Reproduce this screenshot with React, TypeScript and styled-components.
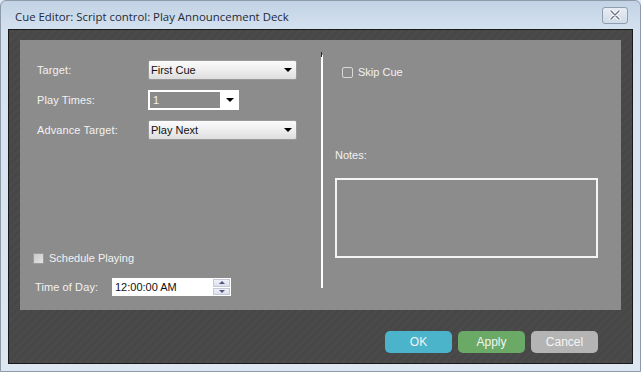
import React from 'react';
import { styled, createGlobalStyle } from 'styled-components';

const Global = createGlobalStyle`
  html, body { margin: 0; padding: 0; background: #dfe8f3; }
  body { font-family: "Liberation Sans", Arial, sans-serif; }
`;

const Window = styled.div`
  width: 641px;
  height: 372px;
  box-sizing: border-box;
  border: 1px solid #8e9aa8;
  border-radius: 6px 6px 0 0;
  background: linear-gradient(180deg, #c3d3e5 0px, #d4e1ef 30px, #dde7f2 100%);
  display: flex;
  flex-direction: column;
  overflow: hidden;
`;

const TitleBar = styled.div`
  height: 28px;
  flex: none;
  display: flex;
  align-items: center;
  justify-content: space-between;
  padding: 2px 12px 0 14px;
  box-sizing: border-box;
`;

const Title = styled.div`
  font-family: "Open Sans", "Noto Sans", sans-serif;
  font-size: 11.4px;
  color: #1e2a38;
`;

const CloseBtn = styled.div`
  width: 24px;
  height: 15px;
  margin-top: -2px;
  border: 1px solid #8f9db0;
  border-radius: 3px;
  background: linear-gradient(180deg, #e6edf5, #cfdbe8);
  display: flex;
  align-items: center;
  justify-content: center;
`;

const Frame = styled.div`
  margin: 0 7px;
  height: 335px;
  box-sizing: border-box;
  border: 1px solid #1a1a1a;
  background: repeating-linear-gradient(-45deg, #4a4a4a 0px, #4a4a4a 3px, #474747 3px, #474747 6px);
  padding: 10px 11px 0 11px;
  display: flex;
  flex-direction: column;
`;

const Panel = styled.div`
  height: 270px;
  background: #8c8c8c;
  display: grid;
  grid-template-columns: 301px 2px 1fr;
  color: #f2f2f2;
  font-size: 11px;
`;

const LeftCol = styled.div`
  display: flex;
  flex-direction: column;
  padding: 20px 0 14px 0;
`;

const FieldRow = styled.div`
  display: flex;
  align-items: center;
  height: 20px;
  margin-bottom: 10px;
  padding-left: 17px;
`;

const Label = styled.div<{ $w: number }>`
  width: ${p => p.$w}px;
  flex: none;
  color: #f2f2f2;
  font-size: 11px;
  letter-spacing: 0.1px;
`;

const Select = styled.div<{ $w: number }>`
  width: ${p => p.$w}px;
  height: 20px;
  box-sizing: border-box;
  border: 1px solid #9a9a9a;
  border-radius: 2px;
  background: linear-gradient(180deg, #fbfbfb 0%, #eeeeee 50%, #dedede 100%);
  display: flex;
  align-items: center;
  justify-content: space-between;
  padding: 0 4px 0 2px;
  color: #111;
  font-size: 11px;
`;

const Arrow = styled.span`
  width: 0;
  height: 0;
  border-left: 4px solid transparent;
  border-right: 4px solid transparent;
  border-top: 4px solid #000;
`;

const ComboBox = styled.div`
  width: 91px;
  height: 20px;
  box-sizing: border-box;
  background: #fff;
  padding: 2px;
  display: flex;
  align-items: center;
`;

const ComboField = styled.div`
  width: 70px;
  height: 16px;
  background: #8a8a8a;
  color: #f0f0f0;
  font-size: 11px;
  display: flex;
  align-items: center;
  padding-left: 3px;
  box-sizing: border-box;
  margin-right: 6px;
`;

const Spacer = styled.div`
  flex: 1;
`;

const CheckRow = styled.label<{ $pl: number }>`
  display: flex;
  align-items: center;
  gap: 5px;
  padding-left: ${p => p.$pl}px;
  font-size: 11px;
  color: #f2f2f2;
`;

const Check = styled.span<{ $filled?: boolean }>`
  width: 11px;
  height: 11px;
  box-sizing: border-box;
  border: 1px solid ${p => (p.$filled ? '#9c9c9c' : '#d8d8d8')};
  border-radius: ${p => (p.$filled ? '0' : '2px')};
  background: ${p => (p.$filled ? 'linear-gradient(135deg, #c9c9c9, #e3e3e3)' : 'transparent')};
  flex: none;
`;

const TimeRow = styled.div`
  display: flex;
  align-items: center;
  padding-left: 15px;
  margin-top: 14px;
`;

const TimeInput = styled.div`
  width: 119px;
  height: 18px;
  box-sizing: border-box;
  background: #fff;
  display: flex;
  align-items: center;
  justify-content: space-between;
  padding: 0 1px 0 3px;
  color: #111;
  font-size: 11px;
`;

const Spinner = styled.div`
  width: 17px;
  height: 16px;
  display: flex;
  flex-direction: column;
  gap: 1px;
`;

const SpinBtn = styled.div<{ $up?: boolean }>`
  flex: 1;
  border: 1px solid #c6c9d8;
  background: linear-gradient(180deg, #f0f1f7, #dcdfeb);
  display: flex;
  align-items: center;
  justify-content: center;
  &::after {
    content: '';
    border-left: 3px solid transparent;
    border-right: 3px solid transparent;
    ${p => (p.$up ? 'border-bottom: 3px solid #4e5680;' : 'border-top: 3px solid #4e5680;')}
  }
`;

const Divider = styled.div`
  margin-top: 15px;
  height: 233px;
  background: #ffffff;
  position: relative;
  &::before {
    content: '';
    position: absolute;
    left: 0;
    top: -3px;
    width: 1px;
    height: 5px;
    background: #2a2a2a;
  }
`;

const RightCol = styled.div`
  display: flex;
  flex-direction: column;
  padding: 26px 0 0 0;
`;

const NotesLabel = styled.div`
  margin: 71px 0 0 12px;
  font-size: 11px;
  color: #f2f2f2;
`;

const NotesBox = styled.div`
  margin: 17px 0 0 12px;
  width: 263px;
  height: 80px;
  box-sizing: border-box;
  border: 2px solid #f4f4f4;
`;

const Footer = styled.div`
  display: flex;
  justify-content: flex-end;
  gap: 6px;
  padding: 21px 23px 0 0;
`;

const Button = styled.div<{ $bg: string }>`
  width: 67px;
  height: 22px;
  border-radius: 5px;
  background: ${p => p.$bg};
  color: #f4f4f4;
  font-size: 12px;
  display: flex;
  align-items: center;
  justify-content: center;
`;

export default function App() {
  return (
    <>
      <Global />
      <Window>
        <TitleBar>
          <Title>Cue Editor: Script control: Play Announcement Deck</Title>
          <CloseBtn>
            <svg width="12" height="10" viewBox="0 0 12 10">
              <path d="M2 1 L10 9 M10 1 L2 9" stroke="#ffffff" strokeWidth="3.2" strokeLinecap="round" />
              <path d="M2 1 L10 9 M10 1 L2 9" stroke="#6b7480" strokeWidth="1.4" strokeLinecap="round" />
            </svg>
          </CloseBtn>
        </TitleBar>
        <Frame>
          <Panel>
            <LeftCol>
              <FieldRow>
                <Label $w={111}>Target:</Label>
                <Select $w={149}>First Cue<Arrow /></Select>
              </FieldRow>
              <FieldRow>
                <Label $w={111}>Play Times:</Label>
                <ComboBox>
                  <ComboField>1</ComboField>
                  <Arrow />
                </ComboBox>
              </FieldRow>
              <FieldRow>
                <Label $w={111}>Advance Target:</Label>
                <Select $w={149}>Play Next<Arrow /></Select>
              </FieldRow>
              <Spacer />
              <CheckRow $pl={13}>
                <Check $filled />
                Schedule Playing
              </CheckRow>
              <TimeRow>
                <Label $w={77}>Time of Day:</Label>
                <TimeInput>
                  12:00:00 AM
                  <Spinner>
                    <SpinBtn $up />
                    <SpinBtn />
                  </Spinner>
                </TimeInput>
              </TimeRow>
            </LeftCol>
            <Divider />
            <RightCol>
              <CheckRow $pl={19}>
                <Check />
                Skip Cue
              </CheckRow>
              <NotesLabel>Notes:</NotesLabel>
              <NotesBox />
            </RightCol>
          </Panel>
          <Footer>
            <Button $bg="#4bb3ca">OK</Button>
            <Button $bg="#6aaa66">Apply</Button>
            <Button $bg="#b4b4b4">Cancel</Button>
          </Footer>
        </Frame>
      </Window>
    </>
  );
}
